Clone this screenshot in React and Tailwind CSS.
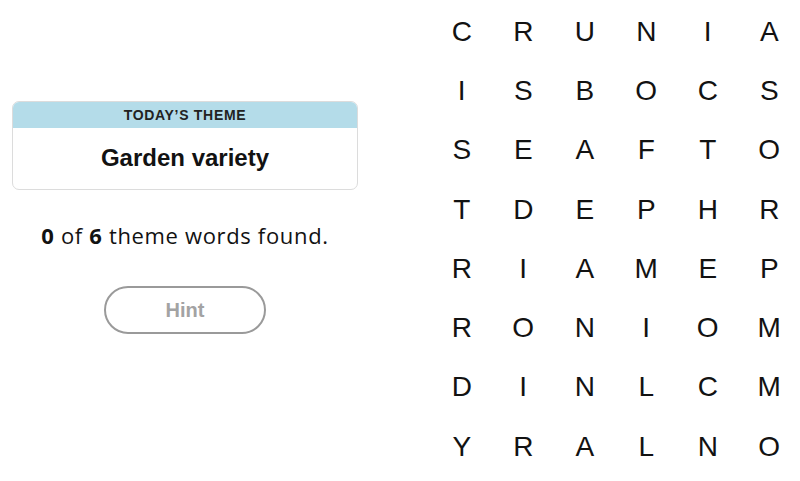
import React from "react";

const rows = [
  ["C", "R", "U", "N", "I", "A"],
  ["I", "S", "B", "O", "C", "S"],
  ["S", "E", "A", "F", "T", "O"],
  ["T", "D", "E", "P", "H", "R"],
  ["R", "I", "A", "M", "E", "P"],
  ["R", "O", "N", "I", "O", "M"],
  ["D", "I", "N", "L", "C", "M"],
  ["Y", "R", "A", "L", "N", "O"],
];

const App = () => {
  return (
    <div
      className="flex w-[800px] h-[481px] bg-white text-[#121212] overflow-hidden"
      style={{ fontFamily: '"Liberation Sans", Arial, sans-serif' }}
    >
      {/* Left: theme card, progress, hint */}
      <div className="w-[370px] px-3 pt-[101px] flex flex-col items-center">
        <div className="w-[346px] rounded-[7px] border border-[#dcdcdc] overflow-hidden">
          <div className="h-[26px] bg-[#b4dce9] flex items-center justify-center text-[14px] font-bold tracking-[0.05em] uppercase text-[#222]">
            Today’s Theme
          </div>
          <div className="h-[61px] pb-[2px] flex items-center justify-center text-[24px] font-bold">
            Garden variety
          </div>
        </div>

        <p className="mt-[34px] text-[22px] leading-none tracking-[0.03em] font-['Open_Sans',sans-serif]">
          <strong>0</strong> of <strong>6</strong> theme words found.
        </p>

        <button
          type="button"
          className="mt-[40px] w-[162px] h-[48px] rounded-full border-2 border-[#9a9a9a] text-[20px] font-bold text-[#a3a3a3]"
        >
          Hint
        </button>
      </div>

      {/* Right: letter grid */}
      <div className="ml-[61px] w-[369px] pt-[2px] grid grid-cols-6 auto-rows-[59.3px]">
        {rows.flat().map((letter, i) => (
          <div
            key={i}
            className="flex items-center justify-center text-[28px] leading-none"
          >
            {letter}
          </div>
        ))}
      </div>
    </div>
  );
};

export default App;
